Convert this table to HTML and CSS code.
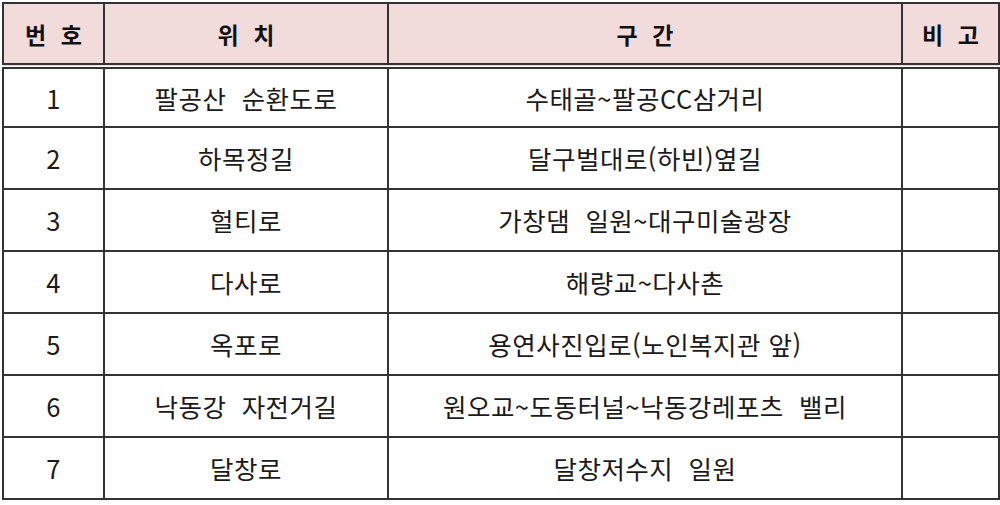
FILE: index.html
```html
<!DOCTYPE html>
<html lang="ko">
<head>
<meta charset="utf-8">
<title>구간 표</title>
<link rel="stylesheet" href="styles.css">
</head>
<body>
<table class="grid">
  <colgroup>
    <col class="c-no"><col class="c-loc"><col class="c-sec"><col class="c-note">
  </colgroup>
  <thead>
    <tr class="head">
      <th>번 호</th><th>위 치</th><th>구 간</th><th>비 고</th>
    </tr>
  </thead>
  <tbody>
    <tr><td>1</td><td>팔공산&nbsp; 순환도로</td><td>수태골~팔공CC삼거리</td><td></td></tr>
    <tr><td>2</td><td>하목정길</td><td>달구벌대로(하빈)옆길</td><td></td></tr>
    <tr><td>3</td><td>헐티로</td><td>가창댐&nbsp; 일원~대구미술광장</td><td></td></tr>
    <tr><td>4</td><td>다사로</td><td>해량교~다사촌</td><td></td></tr>
    <tr><td>5</td><td>옥포로</td><td>용연사진입로(노인복지관 앞)</td><td></td></tr>
    <tr><td>6</td><td>낙동강&nbsp; 자전거길</td><td>원오교~도동터널~낙동강레포츠&nbsp; 밸리</td><td></td></tr>
    <tr><td>7</td><td>달창로</td><td>달창저수지&nbsp; 일원</td><td></td></tr>
  </tbody>
</table>
</body>
</html>
```
FILE: styles.css
```css
html, body {
  margin: 0;
  padding: 0;
  background: #ffffff;
}
body {
  padding: 2px 0 0 2px;
  font-family: "Noto Sans CJK KR", "Noto Sans", sans-serif;
  color: #1a1a1a;
}
.grid {
  border-collapse: collapse;
  table-layout: fixed;
  width: 996px;
}
.c-no { width: 101px; }
.c-loc { width: 284px; }
.c-sec { width: 514px; }
.c-note { width: 97px; }
.grid th, .grid td {
  border: 2px solid #333333;
  text-align: center;
  vertical-align: middle;
  padding: 0;
  line-height: 28px;
}
.grid th {
  background: #f2dcdb;
  font-size: 23px;
  font-weight: 700;
  letter-spacing: 4px;
  text-indent: 4px;
  height: 59px;
  color: #111111;
  border-bottom: 6px double #333333;
}
.grid td {
  height: 60px;
  font-size: 25.5px;
  font-weight: 400;
  letter-spacing: 0.5px;
}
.grid tbody tr:first-child td {
  height: 57px;
}
```
